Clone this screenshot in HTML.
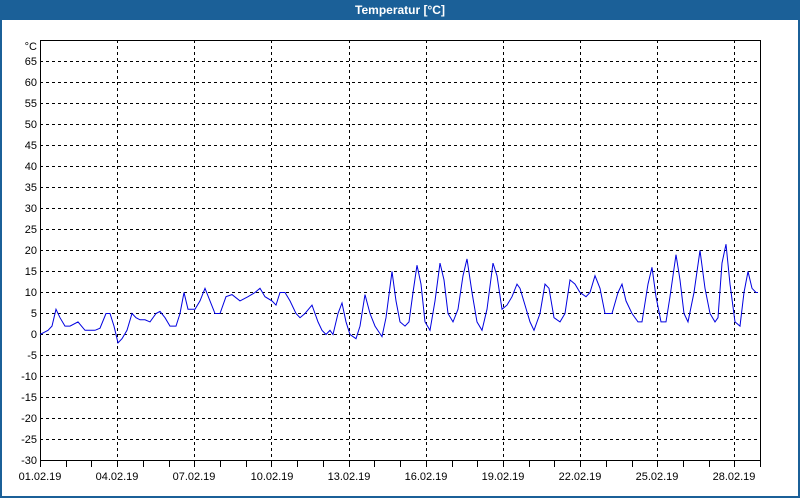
<!DOCTYPE html>
<html><head><style>
body{margin:0;width:800px;height:500px;overflow:hidden;background:#fff;font-family:"Liberation Sans",sans-serif}
.win{position:absolute;left:0;top:0;width:796px;height:496px;border:2px solid #1b6098;border-top:none}
.title{position:absolute;left:0;top:0;width:800px;height:20px;background:#1b6098;color:#fff;font-weight:bold;font-size:12px;text-align:center;line-height:20px}
</style></head><body>
<div class="win"></div>
<div class="title">Temperatur [°C]</div>
<svg width="800" height="500" style="position:absolute;left:0;top:0" font-family="Liberation Sans, sans-serif" font-size="11">
<g stroke="#000" stroke-dasharray="3,3" stroke-width="1">
<line x1="40" x2="760" y1="61.5" y2="61.5"/><line x1="40" x2="760" y1="82.5" y2="82.5"/><line x1="40" x2="760" y1="103.5" y2="103.5"/><line x1="40" x2="760" y1="124.5" y2="124.5"/><line x1="40" x2="760" y1="145.5" y2="145.5"/><line x1="40" x2="760" y1="166.5" y2="166.5"/><line x1="40" x2="760" y1="187.5" y2="187.5"/><line x1="40" x2="760" y1="208.5" y2="208.5"/><line x1="40" x2="760" y1="229.5" y2="229.5"/><line x1="40" x2="760" y1="250.5" y2="250.5"/><line x1="40" x2="760" y1="271.5" y2="271.5"/><line x1="40" x2="760" y1="292.5" y2="292.5"/><line x1="40" x2="760" y1="313.5" y2="313.5"/><line x1="40" x2="760" y1="334.5" y2="334.5"/><line x1="40" x2="760" y1="355.5" y2="355.5"/><line x1="40" x2="760" y1="376.5" y2="376.5"/><line x1="40" x2="760" y1="397.5" y2="397.5"/><line x1="40" x2="760" y1="418.5" y2="418.5"/><line x1="40" x2="760" y1="439.5" y2="439.5"/>
<line x1="117.5" x2="117.5" y1="40" y2="461"/><line x1="194.5" x2="194.5" y1="40" y2="461"/><line x1="271.5" x2="271.5" y1="40" y2="461"/><line x1="349.5" x2="349.5" y1="40" y2="461"/><line x1="426.5" x2="426.5" y1="40" y2="461"/><line x1="503.5" x2="503.5" y1="40" y2="461"/><line x1="580.5" x2="580.5" y1="40" y2="461"/><line x1="657.5" x2="657.5" y1="40" y2="461"/><line x1="734.5" x2="734.5" y1="40" y2="461"/>
</g>
<rect x="40.5" y="40.5" width="720" height="420" fill="none" stroke="#000"/>
<g stroke="#000" id="ticks"></g>
<polyline fill="none" stroke="#0000e0" stroke-width="1" vector-effect="non-scaling-stroke" transform="translate(0,334.5) scale(1,-4.2)" points="40,0 44,0.5 48,1 52,2 56,6 60,4 65,2 70,2 78,3 85,1 95,1 100,1.5 106,5 110,5 114,2 118,-2 122,-1 127,1 132,5 136,4 140,3.5 145,3.5 150,3 156,5 160,5.5 165,4 170,2 176,2 180,5 184,10 188,6 195,6 200,8 205,11 210,8 215,5 220,5 226,9 232,9.5 240,8 248,9 255,10 260,11 265,9 272,8 276,7 280,10 285,10 290,8 296,5 300,4 305,5 312,7 318,3 322,1 326,0 330,1 333,0 338,5 342,7.5 346,3 350,0 356,-1 360,2 365,9.5 370,5 375,2 382,-0.5 386,4 392,15 396,8 400,3 405,2 409,3 413,10 417,16.5 421,12 425,3 430,1 435,8 440,17 444,13 448,5 453,3 458,6 463,14 467,18 472,10 477,3 482,1 487,6 493,17 497,14 502,6 507,7 512,9 517,12 520,11 525,7 530,3 534,1 540,5 545,12 549,11 554,4 560,3 565,5 570,13 575,12 580,10 586,9 590,10 595,14 600,11 605,5 612,5 618,10 622,12 626,8 632,5 638,3 642,3 648,12 652,16 656,9 661,3 666,3 670,9 676,19 680,13 684,5 688,3 694,10 700,20 705,11 710,5 715,3 718,4 722,17 726,21.5 730,12 735,3 740,2 744,10 748,15 752,11 756,10 758,10"/>
<g text-anchor="end" fill="#000">
<text x="37" y="50">°C</text>
<text x="37" y="65">65</text><text x="37" y="86">60</text><text x="37" y="107">55</text><text x="37" y="128">50</text><text x="37" y="149">45</text><text x="37" y="170">40</text><text x="37" y="191">35</text><text x="37" y="212">30</text><text x="37" y="233">25</text><text x="37" y="254">20</text><text x="37" y="275">15</text><text x="37" y="296">10</text><text x="37" y="317">5</text><text x="37" y="338">0</text><text x="37" y="359">-5</text><text x="37" y="380">-10</text><text x="37" y="401">-15</text><text x="37" y="422">-20</text><text x="37" y="443">-25</text><text x="37" y="464">-30</text>
</g>
<g text-anchor="middle" fill="#000">
<text x="40" y="480">01.02.19</text><text x="117" y="480">04.02.19</text><text x="194" y="480">07.02.19</text><text x="272" y="480">10.02.19</text><text x="349" y="480">13.02.19</text><text x="426" y="480">16.02.19</text><text x="503" y="480">19.02.19</text><text x="580" y="480">22.02.19</text><text x="657" y="480">25.02.19</text><text x="734" y="480">28.02.19</text>
</g>
</svg>
<script>
var g=document.getElementById('ticks'),s='';
for(var i=0;i<=28;i++){var x=Math.round(40+i*25.72)+0.5;s+='<line x1="'+x+'" x2="'+x+'" y1="461" y2="467"/>';}
g.innerHTML=s;
</script>
</body></html>
